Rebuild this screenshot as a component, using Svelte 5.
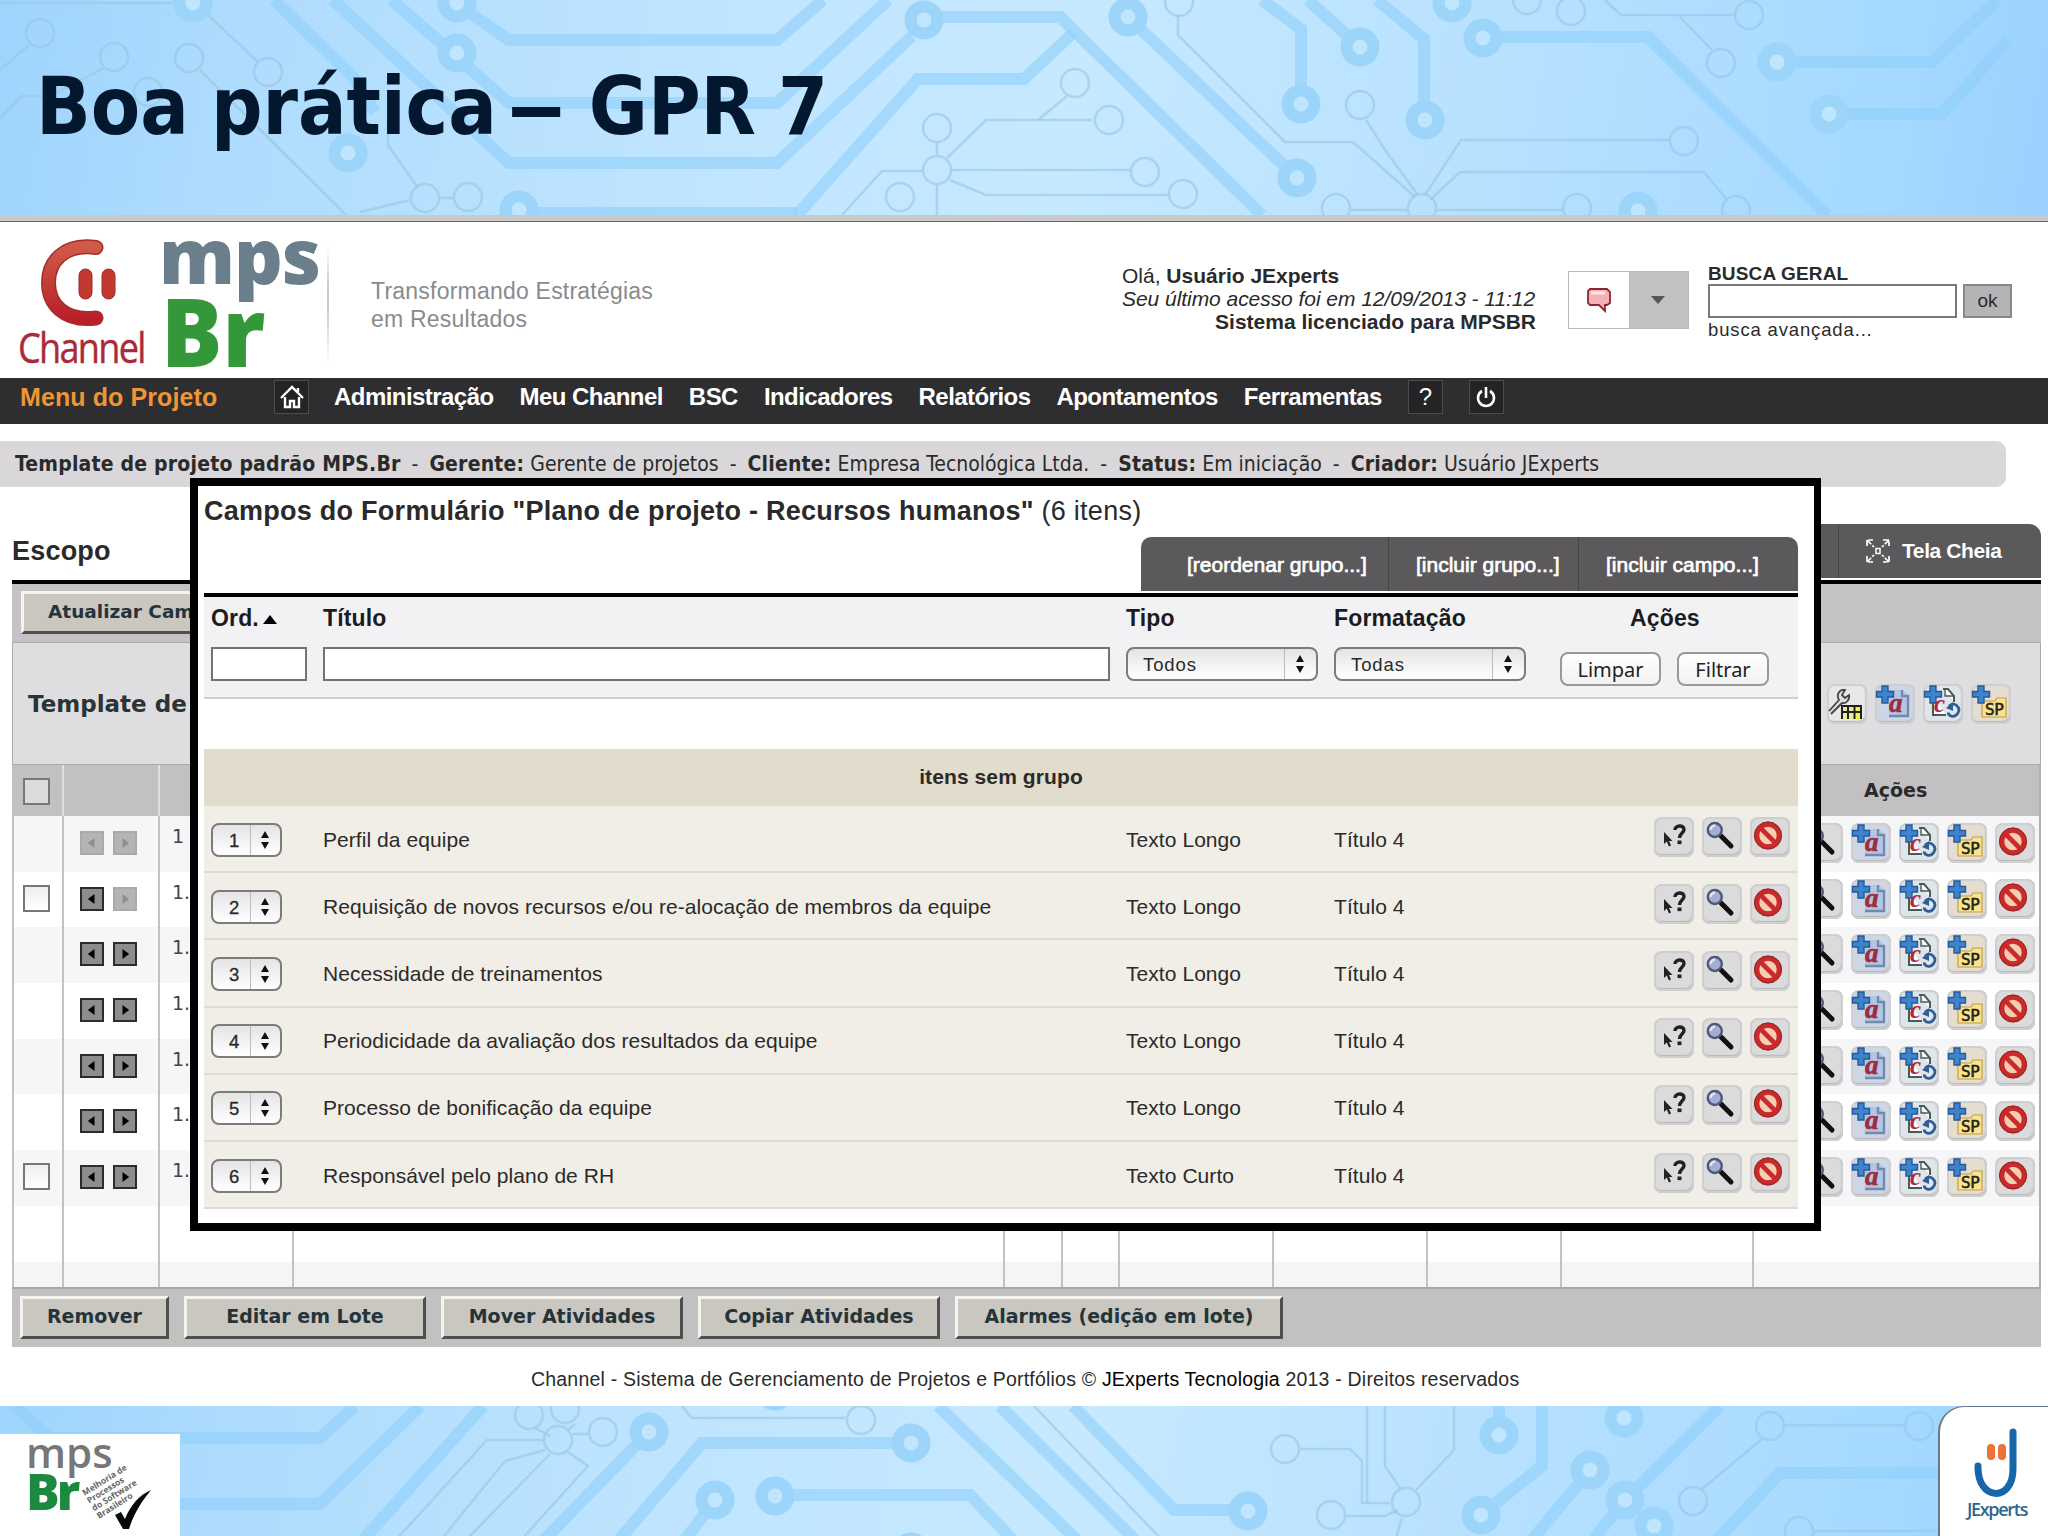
<script>
  const menu = ['Administração', 'Meu Channel', 'BSC', 'Indicadores', 'Relatórios', 'Apontamentos', 'Ferramentas'];

  const fields = [
    { title: 'Perfil da equipe', type: 'Texto Longo', format: 'Título 4' },
    { title: 'Requisição de novos recursos e/ou re-alocação de membros da equipe', type: 'Texto Longo', format: 'Título 4' },
    { title: 'Necessidade de treinamentos', type: 'Texto Longo', format: 'Título 4' },
    { title: 'Periodicidade da avaliação dos resultados da equipe', type: 'Texto Longo', format: 'Título 4' },
    { title: 'Processo de bonificação da equipe', type: 'Texto Longo', format: 'Título 4' },
    { title: 'Responsável pelo plano de RH', type: 'Texto Curto', format: 'Título 4' }
  ];

  const activities = [
    { number: '1', check: false, left: false, right: false },
    { number: '1.', check: true, left: true, right: false },
    { number: '1.', check: false, left: true, right: true },
    { number: '1.', check: false, left: true, right: true },
    { number: '1.', check: false, left: true, right: true },
    { number: '1.', check: false, left: true, right: true },
    { number: '1.', check: true, left: true, right: true }
  ];

  const bulkActions = [
    { label: 'Remover', size: 'small' },
    { label: 'Editar em Lote', size: 'medium' },
    { label: 'Mover Atividades', size: 'medium' },
    { label: 'Copiar Atividades', size: 'medium' },
    { label: 'Alarmes (edição em lote)', size: 'large' }
  ];

  // circuit board pattern: thick tracks with rings, thin tracks with open circles
  const topBoard = {
    tracks: [
      'M274 0L353 77L375 112', 'M333 0L509 163H777L912 36', 'M392 0L509 103H777L888 0', 'M451 0L509 40H777L823 0',
      'M797 215L918 79H1024L1073 33', 'M924 17H1060L1262 215', 'M1128 17L1297 178', 'M1262 0L1301 29V104',
      'M1308 0L1360 47', 'M1377 0L1424 39V120', 'M1483 37H1648L1827 215', 'M1777 62H1932L1997 0',
      'M1829 114H1942L2008 40', 'M519 213H797'
    ],
    rings: [[193, 3], [457, 3], [457, 53], [348, 153], [519, 210], [924, 20], [1128, 17], [1297, 178], [1301, 104], [1360, 47],
      [1425, 120], [1452, 3], [1483, 38], [1777, 62], [1829, 114], [1638, 211]],
    lines: [
      'M28 46L0 70', 'M0 118L22 96H50L104 68', 'M205 12L258 62', 'M200 70L346 215', 'M388 120V145L418 188', 'M440 198H453', 'M410 200L360 212',
      'M937 143V155', 'M842 215L882 171H922', 'M947 158L986 120H1092', 'M952 170H1130', 'M950 180L986 195H1168', 'M937 185V215', 'M1038 120L1067 96',
      'M1178 17V35L1285 142H1353L1415 197', 'M1366 120L1385 150L1418 195', 'M1425 195L1461 140H1669', 'M1430 200L1460 172H1704L1727 200',
      'M1351 210H1407M1437 210H1562', 'M1605 0L1621 15H1734', 'M1680 17L1712 50', 'M0 3H180'
    ],
    nodes: [[40, 33], [114, 57], [189, 58], [268, 72], [148, 92], [425, 198], [468, 197], [937, 128], [937, 170], [900, 197], [1075, 83], [1109, 120],
      [1145, 172], [1183, 194], [1179, 2], [1360, 105], [1422, 208], [1336, 208], [1577, 208], [1684, 141], [1736, 210], [1527, 0], [1571, 11],
      [1749, 15], [1721, 63]]
  };

  const bottomBoard = {
    tracks: [
      'M15 0L50 32H320L355 0', 'M180 98H320L420 0', 'M362 135L483 0', 'M649 26L543 135', 'M618 135L702 37H911', 'M715 94L684 135',
      'M775 89H970L1014 135', 'M938 0L1078 135', 'M1000 0L1136 135', 'M1073 0L1174 104H1248', 'M1499 29V0', 'M1542 0V60L1481 109',
      'M1624 12V0', 'M1590 64L1531 135', 'M1720 0L1625 94', 'M1716 135L1780 67H1940', 'M1625 94L1592 135'
    ],
    rings: [[649, 26], [911, 37], [715, 94], [775, 90], [1248, 105], [1499, 29], [1481, 109], [1624, 12], [1590, 64], [1625, 94], [1654, 120], [775, -15], [911, 146]],
    lines: [
      'M395 135L487 34H543', 'M440 135L505 55L545 44', 'M465 135L550 48', 'M520 135L588 60L568 46', 'M573 28H588', 'M682 0L692 12H845',
      'M1034 0L1163 135', 'M1300 43H1350L1362 55V97H1390', 'M1367 0V97', 'M1385 0V60L1400 82', 'M1454 0V44L1416 84', 'M1346 110H1385L1398 104', 'M1402 112L1395 135',
      'M1785 19H1904', 'M1762 33L1702 83', 'M1814 125H1938', 'M535 22L550 30M575 18L568 24'
    ],
    nodes: [[529, 9], [565, 3], [558, 34], [603, 26], [861, 14], [1285, 43], [1331, 109], [1406, 96], [1770, 20], [1919, 20], [1693, 95], [1799, 125]]
  };
</script>

{#snippet board(data, height)}
  <svg class="board" viewBox="0 0 2048 {height}" width="2048" {height} aria-hidden="true">
    {#each data.lines as d}<path class="line" {d} />{/each}
    {#each data.nodes as [x, y]}<circle class="node" cx={x} cy={y} r="14" />{/each}
    {#each data.tracks as d}<path class="track" {d} />{/each}
    {#each data.rings as [x, y]}<circle class="ring" cx={x} cy={y} r="13.500" />{/each}
  </svg>
{/snippet}

{#snippet helpIcon()}
  <svg class="icon" viewBox="0 0 40 40">
    <path d="M10 15V27L12.7 24.5L15 29.5L17 28.5L15 24H18.5Z" fill="#222" />
    <path d="M21 13C21 8 30 7.500 30 12.500C30 16 25.500 16 25.500 21" fill="none" stroke="#222" stroke-width="3.400" />
    <rect x="23.500" y="23.500" width="4" height="3.600" fill="#222" />
  </svg>
{/snippet}

{#snippet searchIcon()}
  <svg class="icon" viewBox="0 0 40 40">
    <path d="M19 19L29 29" stroke="#111" stroke-width="5" stroke-linecap="round" />
    <circle cx="12.800" cy="13" r="7" fill="#a3aed2" stroke="#4e5878" stroke-width="2.400" />
    <path d="M8.500 13A5 5 0 0 1 13 8.500" fill="none" stroke="#dfe6f8" stroke-width="2.400" />
  </svg>
{/snippet}

{#snippet blockIcon()}
  <svg class="icon" viewBox="0 0 40 40">
    <circle cx="18" cy="18.500" r="11.200" fill="#f5cdb0" stroke="#c92a2a" stroke-width="5" />
    <path d="M10.500 11L25.500 26" stroke="#c92a2a" stroke-width="4.600" />
    <circle cx="18" cy="18.500" r="13.600" fill="none" stroke="#8e2022" stroke-width="1" />
  </svg>
{/snippet}

{#snippet plus()}
  <path d="M7 2H13V7.500H18.500V13H13V19H7V13H1.500V7.500H7Z" fill="#3f83cb" stroke="#245a9c" stroke-width="1.400" />
{/snippet}

{#snippet addTextIcon()}
  <svg class="icon blue" viewBox="0 0 40 40">
    <path d="M14 6H28L34 12V33H14Z" fill="#b5c6e0" />
    <path d="M27 6V12H33V32H14" fill="none" stroke="#7489ae" stroke-width="2.400" />
    {@render plus()}
    <text x="14" y="27.500" font-family="Liberation Serif" font-size="27" font-weight="700" font-style="italic" fill="#9c2c44" stroke="#9c2c44" stroke-width=".6">a</text>
  </svg>
{/snippet}

{#snippet addLinkedIcon()}
  <svg class="icon pale" viewBox="0 0 40 40">
    <path d="M10 10V31H23M20 5H25L31 12V18" fill="#fff" stroke="#4c5a55" stroke-width="2" />
    <path d="M22 5V12H30" fill="none" stroke="#4c5a55" stroke-width="1.400" />
    {@render plus()}
    <text x="11" y="28" font-family="Liberation Serif" font-size="25" font-weight="700" font-style="italic" fill="#b8243e">c</text>
    <path d="M26 22C32 17 38 24 35 29C32 34 26 33 25 28.500" fill="none" stroke="#2f5f96" stroke-width="2.800" />
    <path d="M23 24L30 18V27Z" fill="#2f5f96" />
  </svg>
{/snippet}

{#snippet addSubIcon()}
  <svg class="icon sand" viewBox="0 0 40 40">
    <path d="M11 17H24L26 14H35V33H11Z" fill="#f9e38d" stroke="#c39d45" stroke-width="1.200" />
    {@render plus()}
    <text x="14" y="30.500" font-family="DejaVu Sans Mono" font-size="16" textLength="19" fill="#26231a" stroke="#26231a" stroke-width=".6">SP</text>
  </svg>
{/snippet}

{#snippet wrenchIcon()}
  <svg class="icon light" viewBox="0 0 40 40">
    <path d="M2 27L12 16C9 11 12 5 18 6L15 11L18 14L22 11C23 16 19 20 15 19L4 30" fill="#ddd" stroke="#444" stroke-width="1.800" />
    <path d="M15 21H34V35H15Z" fill="#e9ea9a" />
    <path d="M27 22H34V35H27Z" fill="#f0f04a" />
    <path d="M15 35V22H34V35M15 28H34M21 22V35M27.500 22V35" fill="none" stroke="#222" stroke-width="2" />
  </svg>
{/snippet}

{#snippet spin()}
  <svg class="spin" viewBox="0 0 10 18" width="10" height="18"><path d="M5 0L9 7H1ZM5 18L1 11H9Z" fill="#111" /></svg>
{/snippet}

<div class="slide">
  <header class="banner">
    {@render board(topBoard, 215)}
    <h1>Boa prática <span class="dash">–</span> GPR 7</h1>
  </header>

  <main class="app">
    <div class="top">
      <div class="channel">
        <svg viewBox="0 0 66 88" width="66" height="88">
          <defs>
            <linearGradient id="red" x1="0" y1="0" x2="0" y2="1"><stop offset="0" stop-color="#cf5a48" /><stop offset="1" stop-color="#b92028" /></linearGradient>
          </defs>
          <path d="M56 8.500C24 4 8.500 23 8.500 43.500C8.500 65 24 83 56 79" fill="none" stroke="#a32d2c" stroke-width="15" stroke-linecap="round" />
          <path d="M56 8.500C24 4 8.500 23 8.500 43.500C8.500 65 24 83 56 79" fill="none" stroke="url(#red)" stroke-width="12" stroke-linecap="round" />
        </svg>
        <svg class="eyes" viewBox="0 0 38 32" width="38" height="32">
          <rect x="1" y="1" width="13" height="30" rx="6.500" fill="#c3392f" stroke="#9c2a28" />
          <rect x="24" y="1" width="13" height="30" rx="6.500" fill="#c3392f" stroke="#9c2a28" />
        </svg>
        <span>Channel</span>
      </div>
      <div class="mps"><span class="mps-top">mps</span><span class="mps-bottom">Br</span></div>
      <p class="tagline">Transformando Estratégias<br />em Resultados</p>
      <div class="user">
        <span>Olá, <b>Usuário JExperts</b></span>
        <i>Seu último acesso foi em 12/09/2013 - 11:12</i>
        <b class="license">Sistema licenciado para MPSBR</b>
      </div>
      <div class="messages">
        <span class="bubble">
          <svg viewBox="0 0 26 26" width="26" height="26"><path d="M4 2H21L24 5V16L21 18H19V24L13 18H4L2 16V4Z" fill="#f4b0b4" stroke="#8c2634" stroke-width="1.800" /><path d="M5 6H19" stroke="#fde6e6" stroke-width="3" /></svg>
        </span>
        <span class="caret"><svg viewBox="0 0 14 8" width="14" height="8"><path d="M0 0H14L7 8Z" fill="#555" /></svg></span>
      </div>
      <form class="search">
        <b>BUSCA GERAL</b>
        <div class="search-row"><span class="box"></span><span class="ok">ok</span></div>
        <span class="advanced">busca avançada...</span>
      </form>
    </div>

    <nav class="menu">
      <span class="project">Menu do Projeto</span>
      <span class="square home">
        <svg viewBox="0 0 28 28" width="28" height="28"><path d="M3 15L14 4L25 15M7 14V24H12V18H16V24H21V14M20 9V5" fill="none" stroke="#fff" stroke-width="2.400" /></svg>
      </span>
      {#each menu as item}<a href="/">{item}</a>{/each}
      <span class="square help">?</span>
      <span class="square power">
        <svg viewBox="0 0 24 24" width="24" height="24"><path d="M8 6A8 8 0 1 0 16 6M12 2V13" fill="none" stroke="#fff" stroke-width="2.600" /></svg>
      </span>
    </nav>

    <div class="project-info">
      <b>Template de projeto padrão MPS.Br</b> <i>-</i> <b>Gerente:</b> Gerente de projetos <i>-</i> <b>Cliente:</b> Empresa Tecnológica Ltda. <i>-</i>
      <b>Status:</b> Em iniciação <i>-</i> <b>Criador:</b> Usuário JExperts
    </div>

    <section class="scope">
      <div class="scope-head">
        <h2>Escopo</h2>
        <div class="scope-tabs">
          <span class="fullscreen">
            <svg viewBox="0 0 26 26" width="26" height="26">
              <path d="M2 8V2H8M2 2L9 9M18 2H24V8M24 2L17 9M2 18V24H8M2 24L9 17M24 18V24H18M24 24L17 17" fill="none" stroke="#fff" stroke-width="1.700" stroke-dasharray="6 1.500" />
              <rect x="11" y="10.500" width="4" height="5" fill="none" stroke="#fff" stroke-width="1.500" />
            </svg>
            Tela Cheia
          </span>
        </div>
      </div>
      <div class="toolbar"><button>Atualizar Cam</button></div>
      <div class="template">
        <h3>Template de</h3>
        <div class="icons">
          {@render wrenchIcon()}{@render addTextIcon()}{@render addLinkedIcon()}{@render addSubIcon()}
        </div>
      </div>
      <div class="grid head">
        <div class="check-cell"><span class="check gray"></span></div>
        {#each Array(9) as _}<div></div>{/each}
        <div class="actions-title">Ações</div>
      </div>
      {#each activities as row}
        <div class="grid row">
          <div class="check-cell">{#if row.check}<span class="check"></span>{/if}</div>
          <div class="arrows">
            <span class="arrow" class:off={!row.left}><svg viewBox="0 0 24 24"><path d="M15 6V18L7 12Z" /></svg></span>
            <span class="arrow" class:off={!row.right}><svg viewBox="0 0 24 24"><path d="M9 6V18L17 12Z" /></svg></span>
          </div>
          <div class="number">{row.number}</div>
          {#each Array(7) as _}<div></div>{/each}
          <div class="icons">
            {@render searchIcon()}{@render addTextIcon()}{@render addLinkedIcon()}{@render addSubIcon()}{@render blockIcon()}
          </div>
        </div>
      {/each}
      <div class="grid">{#each Array(11) as _}<div></div>{/each}</div>
      <div class="grid last">{#each Array(11) as _}<div></div>{/each}</div>
      <div class="bulk">
        {#each bulkActions as action}<button class={action.size}>{action.label}</button>{/each}
      </div>
    </section>

    <p class="copyright">Channel - Sistema de Gerenciamento de Projetos e Portfólios © <span>JExperts Tecnologia</span> 2013 - Direitos reservados</p>

    <section class="modal">
      <h2><b>Campos do Formulário "Plano de projeto - Recursos humanos"</b> (6 itens)</h2>
      <div class="modal-tabs">
        <span class="first">[reordenar grupo...]</span>
        <span class="second">[incluir grupo...]</span>
        <span class="third">[incluir campo...]</span>
      </div>
      <div class="filter">
        <div class="cols labels">
          <b>Ord. <svg viewBox="0 0 14 9" width="14" height="9"><path d="M7 0L14 9H0Z" /></svg></b>
          <b>Título</b>
          <b>Tipo</b>
          <b>Formatação</b>
          <b class="center">Ações</b>
        </div>
        <div class="cols">
          <span class="input short"></span>
          <span class="input"></span>
          <span class="select"><span>Todos</span>{@render spin()}</span>
          <span class="select"><span>Todas</span>{@render spin()}</span>
          <div class="filter-buttons"><button class="clear">Limpar</button><button>Filtrar</button></div>
        </div>
      </div>
      <div class="group">itens sem grupo</div>
      {#each fields as field, i}
        <div class="cols field">
          <span class="select order"><span>{i + 1}</span>{@render spin()}</span>
          <span>{field.title}</span>
          <span>{field.type}</span>
          <span>{field.format}</span>
          <div class="icons">{@render helpIcon()}{@render searchIcon()}{@render blockIcon()}</div>
        </div>
      {/each}
    </section>
  </main>

  <footer>
    {@render board(bottomBoard, 130)}
    <div class="mps-small">
      <span class="small-top">mps</span>
      <span class="small-bottom">Br</span>
      <span class="small-note">Melhoria de<br />Processos<br />do Software<br />Brasileiro</span>
      <svg class="tick" viewBox="0 0 40 42" width="40" height="42"><path d="M2 27L8 24L12 31C17 18 26 7 38 2C29 13 21 25 16 41H10Z" fill="#080808" /></svg>
    </div>
    <div class="jexperts">
      <svg viewBox="0 0 46 70" width="46" height="70">
        <path d="M4 39C3 74 39 76 39 42V5" fill="none" stroke="#1767a8" stroke-width="7" stroke-linecap="round" />
        <rect x="13" y="17" width="8" height="16" rx="4" fill="#ee7236" />
        <rect x="24" y="17" width="8" height="16" rx="4" fill="#ee7236" />
      </svg>
      <span>JExperts</span>
    </div>
  </footer>
</div>

<style>
  :global(body) {
    margin: 0;
    overflow: hidden;
  }

  .slide {
    width: 2048px;
    height: 1536px;
    overflow: hidden;
    display: flex;
    flex-direction: column;
    background: #fff;
    color: #2a2a2a;
    font-family: "Liberation Sans", Arial, sans-serif;
  }

  .slide * {
    box-sizing: border-box;
  }

  h1, h2, h3, p {
    margin: 0;
  }

  .banner, footer {
    position: relative;
    flex: none;
    overflow: hidden;
    background: linear-gradient(100deg, #9fd4fc 0%, #aedcfe 12%, #c0e5ff 35%, #c6e9ff 52%, #b8e1ff 72%, #a5d9ff 92%, #9bd0fe 100%);
  }

  .banner {
    height: 215px;
    padding: 61px 36px;
  }

  .board {
    position: absolute;
    left: 0;
    top: 0;
    fill: none;
  }

  .track {
    stroke: #8fcffa;
    stroke-opacity: .6;
    stroke-width: 12;
  }

  .ring {
    fill: #bfe5ff;
    stroke: #9dd4f9;
    stroke-width: 12;
  }

  .line, .node {
    stroke: #98c6de;
    stroke-width: 2.5;
    stroke-opacity: .6;
  }

  h1 {
    position: relative;
    font-family: "DejaVu Sans Condensed", "DejaVu Sans", sans-serif;
    font-stretch: condensed;
    font-size: 80px;
    line-height: 92px;
    word-spacing: -3px;
    color: #03182f;
    white-space: nowrap;
  }

  .dash {
    display: inline-block;
    margin: 0 13px 0 -1px;
    transform: scaleX(1.7);
  }

  .app {
    position: relative;
    height: 1191px;
    border-top: 6px solid #c9c9c9;
    background: #fff;
  }

  .top {
    height: 157px;
    border-top: 1px solid #666;
    display: flex;
    align-items: flex-start;
  }

  .channel {
    position: relative;
    width: 159px;
    padding: 17px 0 0 18px;
    display: flex;
    flex-direction: column;
  }

  .channel svg {
    margin-left: 22px;
  }

  /* the eyes sit inside the open curve */
  .channel .eyes {
    position: absolute;
    left: 56px;
    top: 46px;
  }

  .channel span {
    align-self: flex-start;
    font-family: "Open Sans", sans-serif;
    font-size: 42px;
    line-height: 40px;
    letter-spacing: -2px;
    color: #ab2a3a;
    transform: scaleX(.86);
    transform-origin: left;
    -webkit-text-stroke: .4px;
  }

  .mps {
    width: 170px;
    height: 130px;
    margin-top: 12px;
    display: flex;
    flex-direction: column;
    font-family: "Open Sans", sans-serif;
    font-weight: 800;
    background: linear-gradient(#fff 10%, #ccc 40%, #ccc 60%, #fff) right / 2px 100% no-repeat;
  }

  .mps-top {
    font-size: 76px;
    line-height: 42px;
    letter-spacing: -1px;
    color: #6b7e8c;
  }

  .mps-bottom {
    margin: 11px 0 0 2px;
    font-size: 96px;
    line-height: 86px;
    color: #34983a;
    transform: scaleX(.95);
    transform-origin: left;
  }

  .tagline {
    width: 751px;
    padding: 55px 0 0 42px;
    font-size: 23px;
    line-height: 28px;
    letter-spacing: .22px;
    color: #8a8a8e;
  }

  .user {
    width: 456px;
    padding: 42px 0 0 42px;
    display: flex;
    flex-direction: column;
    font-size: 21px;
    line-height: 23px;
    white-space: nowrap;
  }

  .user i {
    letter-spacing: -.05px;
  }

  .license {
    width: 414px;
    text-align: right;
  }

  .messages {
    width: 121px;
    height: 58px;
    margin: 49px 19px 0 32px;
    display: flex;
    border: 1px solid #bbb;
  }

  .bubble, .caret {
    flex: 1;
    display: flex;
    align-items: center;
    justify-content: center;
  }

  .caret {
    background: #c1c1c1;
  }

  .search {
    padding-top: 41px;
    display: flex;
    flex-direction: column;
    font-size: 19px;
    line-height: 21px;
  }

  .search b {
    letter-spacing: .15px;
  }

  .search-row {
    display: flex;
    gap: 6px;
  }

  .box {
    width: 249px;
    height: 34px;
    border: 2px solid #777;
  }

  .ok {
    width: 49px;
    height: 34px;
    border: 2px solid #888;
    background: #b4b4b4;
    text-align: center;
    line-height: 30px;
  }

  .advanced {
    font-size: 18.5px;
    line-height: 24px;
    letter-spacing: .85px;
  }

  .menu {
    height: 46px;
    padding: 0 0 8px 20px;
    display: flex;
    align-items: center;
    background: #2e2d2f;
    font-weight: bold;
    font-size: 24px;
  }

  .project {
    width: 254px;
    font-size: 25px;
    color: #ee9536;
    letter-spacing: .1px;
  }

  .menu a {
    margin-right: 26px;
    color: #fff;
    text-decoration: none;
    letter-spacing: -.55px;
  }

  .square {
    width: 35px;
    height: 34px;
    display: flex;
    align-items: center;
    justify-content: center;
    border: 1px solid #4c4b4d;
    background: #242325;
    color: #fff;
  }

  .home {
    margin-right: 25px;
  }

  .help {
    margin-right: 26px;
    font-weight: normal;
  }

  .project-info {
    width: 2006px;
    height: 46px;
    margin-top: 17px;
    padding-left: 15px;
    border-radius: 0 10px 10px 0;
    background: #d9d7d9;
    font-family: "DejaVu Sans Condensed", "DejaVu Sans", sans-serif;
    font-stretch: condensed;
    font-size: 21px;
    line-height: 47px;
    white-space: nowrap;
  }

  .project-info b {
    letter-spacing: .2px;
  }

  .project-info i {
    margin: 0 5px;
    font-style: normal;
  }

  .scope {
    width: 2029px;
    margin: 37px 0 0 12px;
  }

  .scope-head {
    height: 60px;
    display: flex;
    justify-content: space-between;
    border-bottom: 4px solid #000;
  }

  .scope h2 {
    font-size: 27px;
    line-height: 54px;
    letter-spacing: .2px;
  }

  .scope-tabs {
    width: 700px;
    height: 54px;
    display: flex;
    justify-content: flex-end;
    border-radius: 0 12px 0 0;
    background: #5b595b;
  }

  .fullscreen {
    width: 203px;
    padding-left: 26px;
    display: flex;
    align-items: center;
    gap: 11px;
    border-left: 1px solid #444;
    color: #fff;
    font-weight: bold;
    font-size: 21px;
    letter-spacing: -.4px;
  }

  .toolbar {
    height: 58px;
    padding: 7px 9px;
    background: #c4c2c4;
  }

  .toolbar button, .bulk button {
    height: 43px;
    padding: 0 0 3px;
    border: 3px solid;
    border-color: #f4f3ee #4f4f4c #4f4f4c #f4f3ee;
    background: #c9c7c0;
    color: #26343a;
    font: bold 19px "DejaVu Sans", sans-serif;
    white-space: nowrap;
  }

  .toolbar button {
    width: 260px;
    padding-left: 24px;
    text-align: left;
    font-size: 18.5px;
  }

  .template {
    height: 123px;
    padding: 0 29px 0 15px;
    display: flex;
    align-items: center;
    justify-content: space-between;
    border: 1px solid #aaa;
    background: #dedddf;
  }

  .template h3 {
    font-family: "DejaVu Sans", sans-serif;
    font-size: 23px;
    color: #2a3436;
  }

  .icons {
    display: flex;
    gap: 8px;
  }

  .icon {
    width: 40px;
    height: 40px;
    flex: none;
    border-radius: 8px;
    background: #dcdbdb;
    box-shadow: inset 0 0 0 2px #cfcfcf, inset -1px -2px 1px 1px #b9b9b9;
  }

  .icon.blue {
    background: #cdd6e4;
  }

  .icon.pale {
    background: #dfe6ea;
  }

  .icon.sand {
    background: #e4ddd0;
  }

  .icon.light {
    background: #e8e8e8;
  }

  .grid {
    display: grid;
    grid-template-columns: 50px 96px 134px 711px 58px 57px 154px 154px 134px 192px 289px;
    height: 55.7px;
    border-right: 2px solid #b0b0b0;
  }

  .grid > div {
    border-left: 2px solid #c3c1c4;
  }

  .row:nth-child(odd) {
    background: #f6f5f7;
  }

  .grid.head {
    height: 51px;
    background: #c2c0c2;
  }

  .grid.head > div + div {
    border-color: #dedede;
  }

  .grid.last {
    height: 25px;
    background: #f5f4f6;
  }

  .actions-title {
    font: bold 19px/50px "DejaVu Sans", sans-serif;
    padding-left: 110px;
  }

  .check-cell {
    padding: 13px 0 0 9px;
  }

  .check {
    display: block;
    width: 27px;
    height: 27px;
    border: 2px solid #777;
    background: linear-gradient(#eee, #fff);
  }

  .check.gray {
    background: #dcdbdc;
  }

  .arrows {
    display: flex;
    gap: 9px;
    padding: 15px 0 0 16px;
  }

  .arrow {
    width: 24px;
    height: 24px;
    border: 2px solid #2c2c2c;
    background: #8e8c8e;
  }

  .arrow svg {
    display: block;
  }

  .arrow.off {
    border-color: #aaa;
    background: #b5b4b5;
  }

  .arrow.off path {
    fill: #8f8f8f;
  }

  .number {
    padding: 9px 0 0 12px;
    font-family: "DejaVu Sans", sans-serif;
    font-size: 19px;
    color: #444;
  }

  .grid .icons {
    padding: 7px 0 0 49px;
  }

  .bulk {
    height: 60px;
    padding: 7px 8px;
    display: flex;
    gap: 15px;
    border-top: 2px solid #a8a7a8;
    background: #c2c1c1;
  }

  .bulk button {
    padding-bottom: 2px;
  }

  .bulk .small {
    width: 149px;
  }

  .bulk .medium {
    width: 242px;
  }

  .bulk .large {
    width: 328px;
  }

  .copyright {
    margin: 20px 0 0 531px;
    font-size: 19.5px;
    line-height: 24px;
    letter-spacing: .2px;
    white-space: nowrap;
  }

  .copyright span {
    color: #000;
  }

  .modal {
    position: absolute;
    left: 190px;
    top: 257px;
    width: 1631px;
    height: 753px;
    padding: 0 16px 0 6px;
    border: 8px solid #000;
    border-right-width: 7px;
    background: #fff;
  }

  .modal h2 {
    height: 51px;
    font-size: 27px;
    line-height: 50px;
    letter-spacing: .26px;
    font-weight: normal;
    white-space: nowrap;
  }

  .modal-tabs {
    width: 657px;
    height: 54px;
    margin-left: auto;
    display: flex;
    border-radius: 10px 10px 0 0;
    background: #5b595b;
    color: #fff;
    font-size: 21px;
    line-height: 56px;
    -webkit-text-stroke: .7px #fff;
  }

  .modal-tabs span + span {
    border-left: 1px solid #454345;
  }

  .first {
    width: 247px;
    padding-left: 46px;
  }

  .second {
    width: 190px;
    padding-left: 27px;
  }

  .third {
    padding-left: 27px;
  }

  .filter {
    height: 106px;
    margin-top: 2px;
    border-top: 4px solid #000;
    border-bottom: 2px solid #cfcfd2;
    background: #f2f1f4;
  }

  .cols {
    display: grid;
    grid-template-columns: 112px 803px 208px 226px 1fr;
    padding-left: 7px;
  }

  .labels {
    height: 50px;
    font-size: 23px;
    line-height: 42px;
    letter-spacing: .15px;
    color: #1c1c1c;
  }

  .labels svg {
    margin-left: -2px;
    vertical-align: 2px;
  }

  .center {
    padding-left: 70px;
  }

  .input {
    width: 787px;
    height: 34px;
    border: 2px solid #747276;
    background: #fff;
  }

  .input.short {
    width: 96px;
  }

  .select {
    width: 192px;
    height: 34px;
    padding-right: 11px;
    display: flex;
    align-items: center;
    justify-content: space-between;
    border: 2px solid #7c7c7c;
    border-radius: 8px;
    background: linear-gradient(#e4e4e4, #fff);
    font-size: 18.5px;
    letter-spacing: .9px;
  }

  .select > span {
    flex: 1;
    height: 30px;
    padding-left: 15px;
    margin-right: 10px;
    line-height: 31px;
    border-right: 1px solid #bbb;
  }

  .filter-buttons {
    display: flex;
    gap: 16px;
    padding-top: 5px;
  }

  .filter-buttons button {
    width: 92px;
    height: 34px;
    padding: 0;
    border: 2px solid #999;
    border-radius: 8px;
    background: linear-gradient(#fff, #f2f2f2);
    font: 20px "Noto Sans", sans-serif;
    color: #222;
  }

  .filter-buttons .clear {
    width: 101px;
  }

  .group {
    height: 57px;
    margin-top: 50px;
    background: #e2dccd;
    text-align: center;
    font-size: 21px;
    font-weight: bold;
    line-height: 55px;
    letter-spacing: .1px;
  }

  .field {
    height: 67.2px;
    align-items: center;
    border-bottom: 2px solid #dddbd3;
    padding-top: 2px;
    background: #f1eee7;
    font-size: 21px;
    letter-spacing: .06px;
    white-space: nowrap;
  }

  .order {
    width: 71px;
    padding-right: 10px;
    -webkit-text-stroke: .3px;
  }

  .order > span {
    padding-left: 16px;
    margin-right: 9px;
  }

  .field .icons {
    padding-left: 94px;
    margin-top: -6px;
  }

  footer {
    height: 130px;
    display: flex;
    justify-content: space-between;
  }

  .mps-small {
    position: relative;
    width: 180px;
    height: 102px;
    margin-top: 28px;
    padding: 2px 0 0 26px;
    display: flex;
    flex-direction: column;
    background: #fff;
    font-family: "Open Sans", sans-serif;
  }

  .small-top {
    font-size: 42px;
    line-height: 32px;
    font-weight: 600;
    color: #777;
  }

  .small-bottom {
    font-size: 50px;
    line-height: 47px;
    font-weight: 800;
    letter-spacing: -3px;
    color: #1c8a3e;
  }

  /* slogan and tick laid over the small logo */
  .small-note {
    position: absolute;
    left: 86px;
    top: 39px;
    font: bold 8.5px/9px "Open Sans", sans-serif;
    color: #666;
    transform: rotate(-32deg);
  }

  .tick {
    position: absolute;
    left: 113px;
    top: 54px;
  }

  .jexperts {
    position: relative;
    width: 110px;
    padding: 20px 0 0 6px;
    display: flex;
    flex-direction: column;
    align-items: center;
    border-left: 2px solid #678;
    border-top: 1px solid #678;
    border-radius: 26px 0 0 0;
    background: #fff;
    font: 600 18px/24px "Open Sans", sans-serif;
    letter-spacing: -1.3px;
    color: #2c6493;
  }
</style>
